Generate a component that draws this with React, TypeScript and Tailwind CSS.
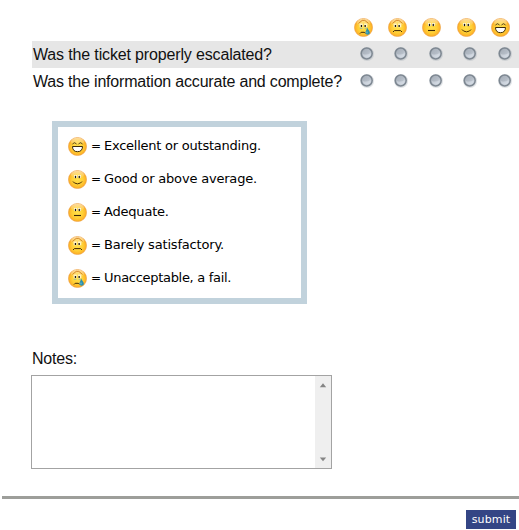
type Mood = 'awful' | 'sad' | 'neutral' | 'smile' | 'laugh';

const moods: Mood[] = ['awful', 'sad', 'neutral', 'smile', 'laugh'];

const questions = [
  {
    text: 'Was the ticket properly escalated?',
    row: 'bg-[#e6e6e6]',
    tracking: 'tracking-[-0.15px]',
  },
  {
    text: 'Was the information accurate and complete?',
    row: 'bg-white',
    tracking: 'tracking-[-0.19px]',
  },
];

const legend: { mood: Mood; text: string; tracking: string }[] = [
  { mood: 'laugh', text: 'Excellent or outstanding.', tracking: 'tracking-[-0.24px]' },
  { mood: 'smile', text: 'Good or above average.', tracking: 'tracking-[-0.19px]' },
  { mood: 'neutral', text: 'Adequate.', tracking: 'tracking-[-0.2px]' },
  { mood: 'sad', text: 'Barely satisfactory.', tracking: 'tracking-[-0.18px]' },
  { mood: 'awful', text: 'Unacceptable, a fail.', tracking: 'tracking-[-0.3px]' },
];

function Defs() {
  return (
    <svg width="0" height="0" className="absolute" aria-hidden="true">
      <defs>
        <radialGradient id="face" cx="0.5" cy="0.5" r="0.53">
          <stop offset="0" stopColor="#ffe04a" />
          <stop offset="0.55" stopColor="#ffd036" />
          <stop offset="0.85" stopColor="#fdb428" />
          <stop offset="1" stopColor="#f09a2c" />
        </radialGradient>
        <linearGradient id="shine" x1="0" y1="0" x2="0" y2="1">
          <stop offset="0" stopColor="#fff" stopOpacity="0.55" />
          <stop offset="1" stopColor="#fff" stopOpacity="0" />
        </linearGradient>
        <linearGradient id="knob" x1="0" y1="0" x2="1" y2="1">
          <stop offset="0" stopColor="#a3abb5" />
          <stop offset="0.5" stopColor="#b3bbc5" />
          <stop offset="1" stopColor="#d9e0e9" />
        </linearGradient>
      </defs>
    </svg>
  );
}

function Face({ mood }: { mood: Mood }) {
  const unhappy = mood === 'sad' || mood === 'awful';
  return (
    <svg width="19" height="19" viewBox="0 0 19 19" className="block shrink-0" fill="none">
      <circle cx="9.5" cy="9.5" r="9.1" fill="url(#face)" stroke="#eea548" strokeWidth="0.6" />
      <ellipse cx="9.5" cy="4.6" rx="6.6" ry="3.8" fill="url(#shine)" />
      {mood === 'laugh' && (
        <g stroke="#3b290a">
          <path d="M4.5 7.3Q6.5 4.2 8.5 7.3M10.5 7.3Q12.5 4.2 14.5 7.3" strokeWidth="0.9" />
          <path d="M4.5 9.5h10c0 3.4-1.8 5.2-5 5.2s-5-1.8-5-5.2z" fill="#fff" />
        </g>
      )}
      {(mood === 'smile' || mood === 'neutral') && (
        <>
          <path d="M6 5h3v3H6zM10 5h3v3h-3z" fill="#fff6d0" />
          <path d="M7 6h1v2H7zM10.8 6h1v2h-1z" fill="#1c160c" stroke="#1c160c" strokeWidth="0.3" />
        </>
      )}
      {mood === 'smile' && <path d="M5 11.5l1.5 1.5q3 1.7 6 0l1.5-1.5" stroke="#4d3107" />}
      {mood === 'neutral' && <path d="M6 12.5h7" stroke="#3d2806" strokeWidth="1.1" />}
      {unhappy && (
        <>
          <path d="M5.6 5.6h3.2v3.6H5.6zM10.1 5.6h3.2v3.6h-3.2z" fill="#fff3c4" />
          <path d="M4.5 5.4L8.2 2.4h2.6l3.7 3" stroke="#cf7f22" strokeWidth="0.9" />
          <path d="M6.8 7h1.3v2H6.8zM10.5 7h1.3v2h-1.3z" fill="#1c160c" />
        </>
      )}
      {mood === 'sad' && <path d="M5 14l1.4-1.4h6.2L14 14" stroke="#3f2806" />}
      {mood === 'awful' && (
        <>
          <path d="M5.8 10.3h2.6M10.6 10.3h2.2" stroke="#8fbcae" strokeWidth="0.9" />
          <path d="M6 15.5l1.2-1.2h3l1.2 1" stroke="#3f2806" />
          <path d="M13.2 9.3c.3 2.2 2.7 3.5 2.7 5.6a2.3 2.3 0 0 1-4.5 0c0-2 1.6-3.2 1.8-5.6z" fill="#2a8fae" />
          <path d="M13 13.5v1.8" stroke="#7fcbd6" strokeWidth="0.9" />
        </>
      )}
    </svg>
  );
}

function Radio() {
  return (
    <svg width="17" height="17" viewBox="0 0 17 17" className="block" fill="none">
      <circle cx="9.1" cy="9.1" r="7" fill="#8c98a5" fillOpacity="0.25" />
      <circle cx="8.7" cy="8.5" r="5.5" fill="url(#knob)" stroke="#7d8791" strokeWidth="1.5" />
      <path d="M4.7 9q4 1.5 8-1a4 4 0 0 1-8 1" fill="#e2e8f0" fillOpacity="0.5" />
    </svg>
  );
}

export default function App() {
  return (
    <div className="flex h-[530px] w-[519px] flex-col overflow-hidden bg-white font-['Liberation_Sans',Arial,sans-serif] text-[16px] text-[#111]">
      <Defs />
      <div className="flex h-[41px] shrink-0 pt-[18px] pl-[354px]">
        <div className="grid grid-cols-[34px_34px_35px_34px_19px]">
          {moods.map((m) => (
            <Face key={m} mood={m} />
          ))}
        </div>
      </div>
      {questions.map((q) => (
        <div key={q.text} className={`ml-8 flex h-[27px] shrink-0 items-center pb-[2px] ${q.row}`}>
          <span className={`w-[326px] shrink-0 pt-[2px] pl-px whitespace-nowrap ${q.tracking}`}>
            {q.text}
          </span>
          <div className="grid grid-cols-[34px_35px_34px_35px_17px]">
            {moods.map((m) => (
              <Radio key={m} />
            ))}
          </div>
        </div>
      ))}
      <div className="mt-[26px] ml-[52px] flex h-[183px] w-[255px] shrink-0 flex-col gap-[14px] border-6 border-[#c1d2dc] pt-[10px] pl-[10px] font-['DejaVu_Sans',Verdana,sans-serif] text-[13px] text-black">
        {legend.map((item) => (
          <div key={item.mood} className="flex h-[19px] items-center whitespace-nowrap">
            <Face mood={item.mood} />
            <span className="ml-[4px] w-[13px] shrink-0 pb-px text-[12px]">=</span>
            <span className={`pb-px ${item.tracking}`}>{item.text}</span>
          </div>
        ))}
      </div>
      <div className="mt-[43px] ml-8 h-[28px] shrink-0 leading-6 tracking-[-0.2px]">Notes:</div>
      <div className="ml-[31px] flex h-[94px] w-[301px] shrink-0 justify-end border border-[#a3a3a3] bg-white">
        <div className="flex w-[16px] flex-col items-center justify-between bg-[#efefef] pt-[7px] pb-[6px]">
          <svg width="8" height="5" viewBox="0 0 8 5">
            <path d="M4 .3L7.2 4.3H.8z" fill="#858585" />
          </svg>
          <svg width="8" height="5" viewBox="0 0 8 5">
            <path d="M.8 .5h6.4L4 4.3z" fill="#858585" />
          </svg>
        </div>
      </div>
      <div className="mt-[27px] ml-[2px] h-[3px] shrink-0 bg-[#9d9e9a]" />
      <button className="mt-[11px] ml-[466px] flex h-[19px] w-[50px] shrink-0 items-center justify-center bg-[#344585] pt-px font-['DejaVu_Sans',Verdana,sans-serif] text-[11px] tracking-[0.15px] text-white">
        submit
      </button>
    </div>
  );
}
